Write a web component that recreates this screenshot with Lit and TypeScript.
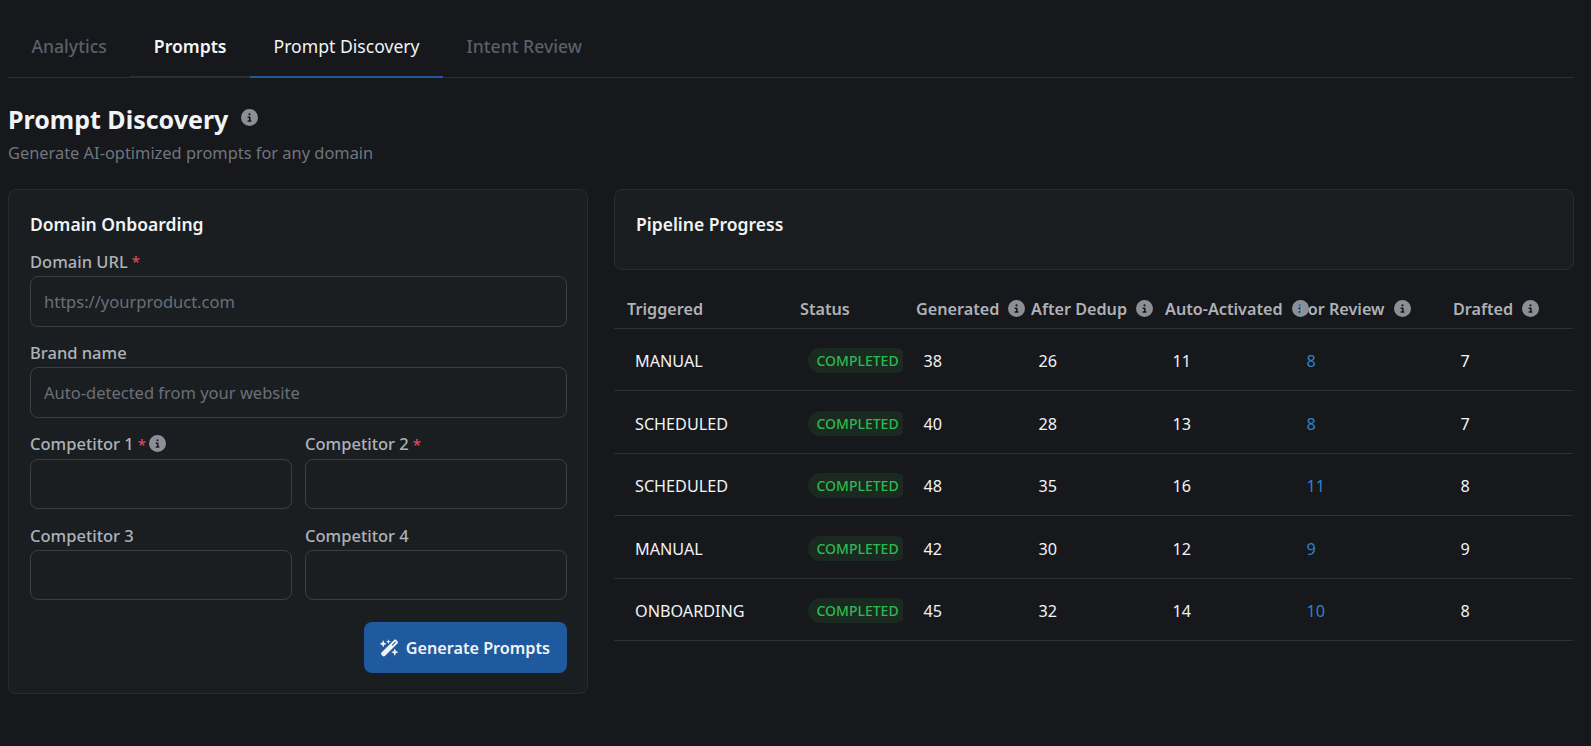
import { LitElement, css, html, svg } from "lit";
import { customElement } from "lit/decorators.js";

const infoIcon = html`<svg class="info" viewBox="0 0 512 512">
  ${svg`<path fill-rule="evenodd" d="M256 512A256 256 0 1 0 256 0a256 256 0 1 0 0 512zM216 336h24V272H216c-13.3 0-24-10.7-24-24s10.7-24 24-24h48c13.3 0 24 10.7 24 24v88h8c13.3 0 24 10.7 24 24s-10.7 24-24 24H216c-13.3 0-24-10.7-24-24s10.7-24 24-24zm40-208a32 32 0 1 1 0 64 32 32 0 1 1 0-64z" />`}
</svg>`;

const wandIcon = html`<svg class="wand" viewBox="0 0 576 512">
  ${svg`<path d="M234.7 42.7L197 56.8c-3 1.1-5 4-5 7.2s2 6.1 5 7.2l37.7 14.1L248.8 123c1.1 3 4 5 7.2 5s6.1-2 7.2-5l14.1-37.7L315 71.2c3-1.1 5-4 5-7.2s-2-6.1-5-7.2L277.3 42.7 263.2 5c-1.1-3-4-5-7.2-5s-6.1 2-7.2 5L234.7 42.7zM46.1 395.4c-18.7 18.7-18.7 49.1 0 67.9l34.6 34.6c18.7 18.7 49.1 18.7 67.9 0L529.9 116.5c18.7-18.7 18.7-49.1 0-67.9L495.3 14.1c-18.7-18.7-49.1-18.7-67.9 0L46.1 395.4zM484.6 82.6l-105 105-23.3-23.3 105-105 23.3 23.3zM7.5 117.2C3 118.9 0 123.2 0 128s3 9.1 7.5 10.8L64 160l21.2 56.5c1.7 4.5 6 7.5 10.8 7.5s9.1-3 10.8-7.5L128 160l56.5-21.2c4.5-1.7 7.5-6 7.5-10.8s-3-9.1-7.5-10.8L128 96 106.8 39.5C105.1 35 100.8 32 96 32s-9.1 3-10.8 7.5L64 96 7.5 117.2zm352 256c-4.5 1.7-7.5 6-7.5 10.8s3 9.1 7.5 10.8L416 416l21.2 56.5c1.7 4.5 6 7.5 10.8 7.5s9.1-3 10.8-7.5L480 416l56.5-21.2c4.5-1.7 7.5-6 7.5-10.8s-3-9.1-7.5-10.8L480 352l-21.2-56.5c-1.7-4.5-6-7.5-10.8-7.5s-9.1 3-10.8 7.5L416 352l-56.5 21.2z" />`}
</svg>`;

interface Run {
  trigger: string;
  generated: number;
  dedup: number;
  activated: number;
  review: number;
  drafted: number;
}

const runs: Run[] = [
  { trigger: "MANUAL", generated: 38, dedup: 26, activated: 11, review: 8, drafted: 7 },
  { trigger: "SCHEDULED", generated: 40, dedup: 28, activated: 13, review: 8, drafted: 7 },
  { trigger: "SCHEDULED", generated: 48, dedup: 35, activated: 16, review: 11, drafted: 8 },
  { trigger: "MANUAL", generated: 42, dedup: 30, activated: 12, review: 9, drafted: 9 },
  { trigger: "ONBOARDING", generated: 45, dedup: 32, activated: 14, review: 10, drafted: 8 },
];

const columns = [
  { label: "Triggered", width: 173, info: false },
  { label: "Status", width: 116, info: false },
  { label: "Generated", width: 115, info: true },
  { label: "After Dedup", width: 134, info: true },
  { label: "Auto-Activated", width: 134, info: true },
  { label: "For Review", width: 154, info: true },
  { label: "Drafted", width: 133, info: true },
];

@customElement("app-root")
export class AppRoot extends LitElement {
  static styles = css`
    :host {
      display: block;
      min-height: 100vh;
      box-sizing: border-box;
      padding: 21px 17px 0 8px;
      background: #16181c;
      color: #f1f3f5;
      font-family: "Noto Sans", "Open Sans", sans-serif;
      font-size: 16px;
    }
    .tabs {
      display: flex;
      height: 57px;
      border-bottom: 1px solid #2c3036;
      box-sizing: border-box;
    }
    .tab {
      display: flex;
      align-items: center;
      padding: 0 23.5px 6px;
      font-size: 17.6px;
      font-weight: 500;
      color: #596069;
      margin-bottom: -1px;
      border-bottom: 2px solid transparent;
    }
    .tab.hover {
      color: #f4f5f6;
      font-weight: 600;
      border-bottom-color: #2b2f34;
    }
    .tab.active {
      color: #f1f3f5;
      font-weight: 400;
      border-bottom-color: #22579b;
    }
    .title {
      display: flex;
      align-items: center;
      gap: 13px;
      margin: 23px 0 0;
      font-size: 25px;
      line-height: 36px;
      font-weight: 700;
      color: #f1f3f5;
    }
    .title .info {
      margin-top: -3px;
    }
    .sub {
      margin: 5px 0 0;
      font-size: 16.4px;
      line-height: 22px;
      color: #70767e;
    }
    .columns {
      display: grid;
      grid-template-columns: 580px 960px;
      column-gap: 26px;
      margin-top: 25px;
      align-items: start;
    }
    .card {
      box-sizing: border-box;
      background: #1a1e21;
      border: 1px solid #282c30;
      border-radius: 8px;
      padding: 21px 20px 20px 21px;
    }
    .card h2 {
      margin: 0;
      font-size: 17.5px;
      line-height: 26px;
      font-weight: 600;
      color: #f1f3f5;
    }
    .form {
      display: flex;
      flex-direction: column;
      gap: 13.8px;
      margin-top: 12px;
    }
    .pair {
      display: grid;
      grid-template-columns: 1fr 1fr;
      column-gap: 13px;
    }
    label {
      display: flex;
      align-items: center;
      gap: 4px;
      height: 24.5px;
      padding-bottom: 2.5px;
      font-size: 16.5px;
      font-weight: 500;
      color: #aeb2b8;
      white-space: nowrap;
    }
    label .req {
      color: #e0475f;
      font-size: 15px;
    }
    label .info {
      margin-left: -1px;
    }
    .input {
      box-sizing: border-box;
      height: 50.5px;
      display: flex;
      align-items: center;
      padding: 0 13px;
      background: #1a1e21;
      border: 1px solid #3a3f45;
      border-radius: 8px;
      font-size: 16.5px;
      color: #6a7078;
    }
    .actions {
      display: flex;
      justify-content: flex-end;
      margin-top: 8px;
    }
    .button {
      display: flex;
      align-items: center;
      gap: 7px;
      height: 51px;
      padding: 0 17px 0 16px;
      background: #1f5a9e;
      border-radius: 8px;
      font-size: 16.2px;
      font-weight: 600;
      color: #f1f3f5;
    }
    .wand {
      width: 19px;
      height: 18px;
      fill: currentColor;
    }
    .info {
      position: relative;
      flex: none;
      width: 17px;
      height: 17px;
      fill: #8b8f98;
    }
    .pipeline {
      height: 81px;
    }
    table {
      margin: 17.5px 0 0;
      width: 959px;
      table-layout: fixed;
      border-collapse: collapse;
    }
    th {
      height: 38px;
      padding: 2px 0 0 13px;
      text-align: left;
      font-size: 16.2px;
      font-weight: 600;
      color: #aeb2b8;
      border-bottom: 1px solid #2c3036;
      white-space: nowrap;
    }
    .head {
      display: flex;
      align-items: center;
      gap: 9px;
    }
    td {
      height: 57.5px;
      padding: 4px 0 0 20.5px;
      font-size: 16.2px;
      color: #f1f3f5;
      border-bottom: 1px solid #2c3036;
      overflow: hidden;
      white-space: nowrap;
    }
    td:first-child {
      padding-left: 21px;
    }
    .badge {
      display: inline-block;
      margin-top: -3px;
      padding: 0 9px;
      line-height: 25px;
      border-radius: 13px;
      background: #1a2a21;
      color: #2fb84f;
      font-size: 14px;
      font-weight: 500;
    }
    .link {
      color: #2f84c8;
    }
  `;

  private field(name: string, placeholder = "", required = false, info = false) {
    return html`<div>
      <label>
        <span>${name}</span>
        ${required ? html`<span class="req">*</span>` : ""}
        ${info ? infoIcon : ""}
      </label>
      <div class="input">${placeholder}</div>
    </div>`;
  }

  render() {
    return html`
      <nav class="tabs">
        <div class="tab">Analytics</div>
        <div class="tab hover">Prompts</div>
        <div class="tab active">Prompt Discovery</div>
        <div class="tab">Intent Review</div>
      </nav>
      <h1 class="title">Prompt Discovery ${infoIcon}</h1>
      <p class="sub">Generate AI-optimized prompts for any domain</p>
      <div class="columns">
        <section class="card">
          <h2>Domain Onboarding</h2>
          <div class="form">
            ${this.field("Domain URL", "https://yourproduct.com", true)}
            ${this.field("Brand name", "Auto-detected from your website")}
            <div class="pair">
              ${this.field("Competitor 1", "", true, true)}
              ${this.field("Competitor 2", "", true)}
            </div>
            <div class="pair">
              ${this.field("Competitor 3")} ${this.field("Competitor 4")}
            </div>
            <div class="actions">
              <div class="button">${wandIcon} Generate Prompts</div>
            </div>
          </div>
        </section>
        <div>
          <section class="card pipeline"><h2>Pipeline Progress</h2></section>
          <table>
            <colgroup>
              ${columns.map((c) => html`<col style="width:${c.width}px" />`)}
            </colgroup>
            <thead>
              <tr>
                ${columns.map(
                  (c) => html`<th>
                    <div class="head">${c.label} ${c.info ? infoIcon : ""}</div>
                  </th>`
                )}
              </tr>
            </thead>
            <tbody>
              ${runs.map(
                (r) => html`<tr>
                  <td>${r.trigger}</td>
                  <td><span class="badge">COMPLETED</span></td>
                  <td>${r.generated}</td>
                  <td>${r.dedup}</td>
                  <td>${r.activated}</td>
                  <td class="link">${r.review}</td>
                  <td>${r.drafted}</td>
                </tr>`
              )}
            </tbody>
          </table>
        </div>
      </div>
    `;
  }
}
